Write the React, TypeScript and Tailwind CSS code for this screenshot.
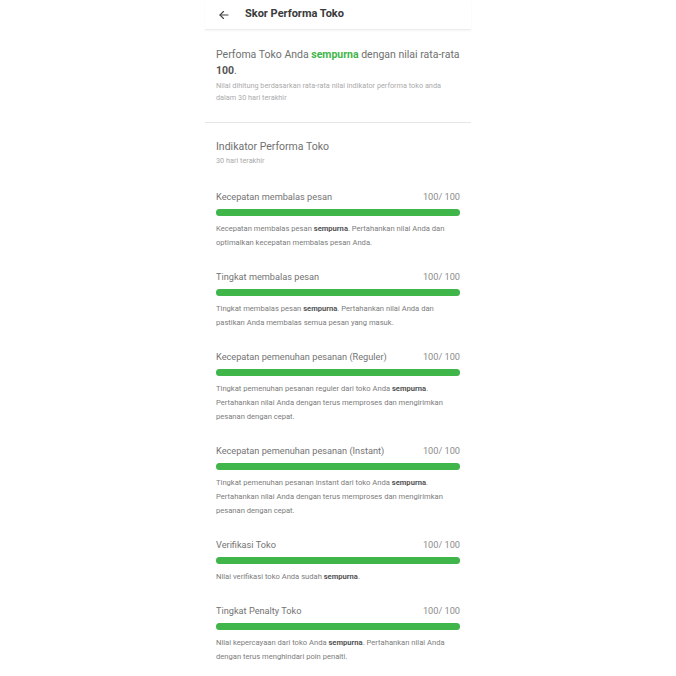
import React from 'react';

type Indicator = {
  label: string;
  score: number;
  desc: React.ReactNode;
};

const INDICATORS: Indicator[] = [
  {
    label: 'Kecepatan membalas pesan',
    score: 100,
    desc: (
      <>
        Kecepatan membalas pesan <b className="font-bold text-[#555]">sempurna</b>. Pertahankan nilai Anda dan optimalkan kecepatan membalas pesan Anda.
      </>
    ),
  },
  {
    label: 'Tingkat membalas pesan',
    score: 100,
    desc: (
      <>
        Tingkat membalas pesan <b className="font-bold text-[#555]">sempurna</b>. Pertahankan nilai Anda dan pastikan Anda membalas semua pesan yang masuk.
      </>
    ),
  },
  {
    label: 'Kecepatan pemenuhan pesanan (Reguler)',
    score: 100,
    desc: (
      <>
        Tingkat pemenuhan pesanan reguler dari toko Anda <b className="font-bold text-[#555]">sempurna</b>. Pertahankan nilai Anda dengan terus memproses dan mengirimkan pesanan dengan cepat.
      </>
    ),
  },
  {
    label: 'Kecepatan pemenuhan pesanan (Instant)',
    score: 100,
    desc: (
      <>
        Tingkat pemenuhan pesanan instant dari toko Anda <b className="font-bold text-[#555]">sempurna</b>. Pertahankan nilai Anda dengan terus memproses dan mengirimkan pesanan dengan cepat.
      </>
    ),
  },
  {
    label: 'Verifikasi Toko',
    score: 100,
    desc: (
      <>
        Nilai verifikasi toko Anda sudah <b className="font-bold text-[#555]">sempurna</b>.
      </>
    ),
  },
  {
    label: 'Tingkat Penalty Toko',
    score: 100,
    desc: (
      <>
        Nilai kepercayaan dari toko Anda <b className="font-bold text-[#555]">sempurna</b>. Pertahankan nilai Anda dengan terus menghindari poin penalti.
      </>
    ),
  },
];

function IndicatorRow({ item }: { item: Indicator }) {
  return (
    <div className="mb-[20px]">
      <div className="flex items-center justify-between h-[14px] text-[9.2px] text-[#747474]">
        <span>{item.label}</span>
        <span className="text-[#8c8c8c]">{item.score}/ 100</span>
      </div>
      <div className="mt-[5px] h-[7px] w-full rounded-full bg-[#e5e5e5]">
        <div className="h-full rounded-full bg-[#3fb54a]" style={{ width: `${item.score}%` }} />
      </div>
      <p className="mt-[6px] text-[7.6px] leading-[14px] text-[#7c7c7c]">{item.desc}</p>
    </div>
  );
}

function App() {
  return (
    <div className="min-h-screen bg-white font-['Roboto',sans-serif]">
      <div className="mx-auto w-[266px]">
        <header className="flex h-[30px] items-center border-b border-[#ececec] shadow-[0_1px_2px_rgba(0,0,0,0.04)]">
          <svg width="12" height="12" viewBox="0 0 24 24" className="ml-[13px] text-[#444]" fill="none" stroke="currentColor" strokeWidth="2.2" strokeLinecap="round" strokeLinejoin="round">
            <path d="M20 12H4" />
            <path d="M11 5l-7 7 7 7" />
          </svg>
          <h1 className="ml-[15px] text-[11px] font-bold text-[#3a3a3a]">Skor Performa Toko</h1>
        </header>

        <section className="px-[11px] pt-[17px] pb-[18px] border-b border-[#e6e6e6]">
          <p className="text-[10.5px] leading-[16px] text-[#707070]">
            Perfoma Toko Anda <b className="font-bold text-[#3fb54a]">sempurna</b> dengan nilai rata-rata{' '}
            <b className="font-bold text-[#555]">100</b>.
          </p>
          <p className="mt-[1px] text-[7.3px] leading-[12px] text-[#ababab]">
            Nilai dihitung berdasarkan rata-rata nilai indikator performa toko anda dalam 30 hari terakhir
          </p>
        </section>

        <section className="px-[11px] pt-[16px]">
          <h2 className="text-[10.5px] leading-[16px] text-[#707070]">Indikator Performa Toko</h2>
          <p className="text-[7.3px] leading-[12px] text-[#ababab]">30 hari terakhir</p>
          <div className="mt-[23px]">
            {INDICATORS.map((item, i) => (
              <IndicatorRow key={i} item={item} />
            ))}
          </div>
        </section>
      </div>
    </div>
  );
}

export default App;
